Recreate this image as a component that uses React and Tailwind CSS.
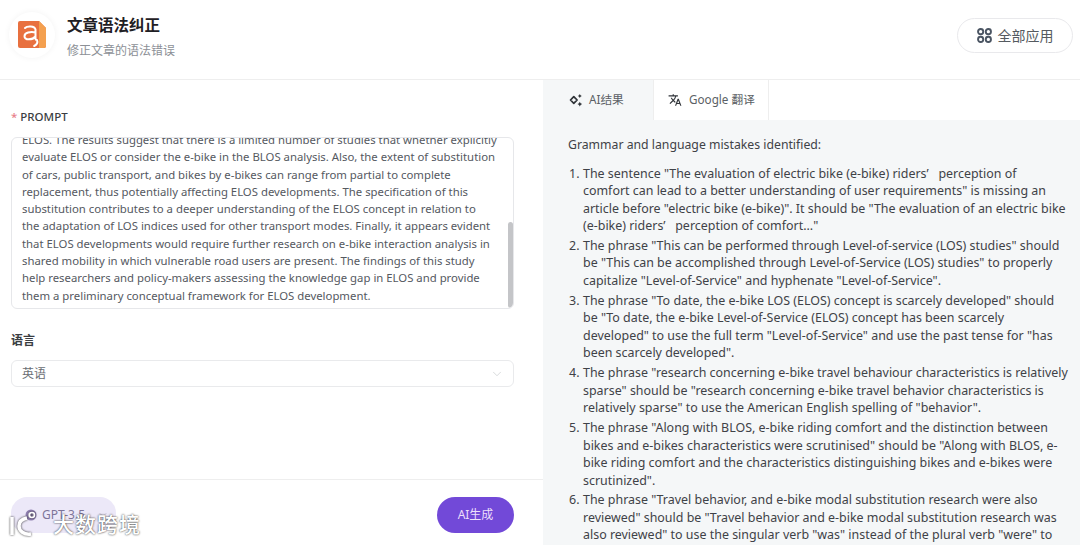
import { ChevronDown } from "lucide-react";
import { MdTranslate } from "react-icons/md";

const FONT = "font-['Noto_Sans','Noto_Sans_CJK_SC',sans-serif]";

const promptLines = [
  "ELOS. The results suggest that there is a limited number of studies that whether explicitly",
  "evaluate ELOS or consider the e-bike in the BLOS analysis. Also, the extent of substitution",
  "of cars, public transport, and bikes by e-bikes can range from partial to complete",
  "replacement, thus potentially affecting ELOS developments. The specification of this",
  "substitution contributes to a deeper understanding of the ELOS concept in relation to",
  "the adaptation of LOS indices used for other transport modes. Finally, it appears evident",
  "that ELOS developments would require further research on e-bike interaction analysis in",
  "shared mobility in which vulnerable road users are present. The findings of this study",
  "help researchers and policy-makers assessing the knowledge gap in ELOS and provide",
  "them a preliminary conceptual framework for ELOS development.",
];

const results = [
  [
    "The sentence \"The evaluation of electric bike (e-bike) riders’   perception of",
    "comfort can lead to a better understanding of user requirements\" is missing an",
    "article before \"electric bike (e-bike)\". It should be \"The evaluation of an electric bike",
    "(e-bike) riders’   perception of comfort...\"",
  ],
  [
    "The phrase \"This can be performed through Level-of-service (LOS) studies\" should",
    "be \"This can be accomplished through Level-of-Service (LOS) studies\" to properly",
    "capitalize \"Level-of-Service\" and hyphenate \"Level-of-Service\".",
  ],
  [
    "The phrase \"To date, the e-bike LOS (ELOS) concept is scarcely developed\" should",
    "be \"To date, the e-bike Level-of-Service (ELOS) concept has been scarcely",
    "developed\" to use the full term \"Level-of-Service\" and use the past tense for \"has",
    "been scarcely developed\".",
  ],
  [
    "The phrase \"research concerning e-bike travel behaviour characteristics is relatively",
    "sparse\" should be \"research concerning e-bike travel behavior characteristics is",
    "relatively sparse\" to use the American English spelling of \"behavior\".",
  ],
  [
    "The phrase \"Along with BLOS, e-bike riding comfort and the distinction between",
    "bikes and e-bikes characteristics were scrutinised\" should be \"Along with BLOS, e-",
    "bike riding comfort and the characteristics distinguishing bikes and e-bikes were",
    "scrutinized\".",
  ],
  [
    "The phrase \"Travel behavior, and e-bike modal substitution research were also",
    "reviewed\" should be \"Travel behavior and e-bike modal substitution research was",
    "also reviewed\" to use the singular verb \"was\" instead of the plural verb \"were\" to",
  ],
];

const AppLogo = () => (
  <div className="-mt-[10px] flex h-[46px] w-[46px] items-center justify-center rounded-full bg-white shadow-[0_0_6px_rgba(0,0,0,0.05)]">
    <svg width="28" height="27" viewBox="0 0 28 27">
      <path d="M2 0H21L28 7V25a2 2 0 0 1-2 2H2a2 2 0 0 1-2-2V2a2 2 0 0 1 2-2z" fill="#e8703f" />
      <path d="M21 0L28 7V25a2 2 0 0 1-2 2H21V0z" fill="#f4a04f" />
      <path
        d="M7 7c2-2 9.500-2.500 10.500 1.500v9c0 1 .5 1.500 1.500 1.500M17.500 11.500c-5-1-11 0-11 3.700 0 4.300 8 4 11 .3M19 19c1 2.500-.5 4.800-2.800 6"
        fill="none"
        stroke="#fff"
        strokeWidth="2"
        strokeLinecap="round"
      />
    </svg>
  </div>
);

const GridIcon = () => (
  <svg width="15" height="15" viewBox="0 0 14 14" fill="none" stroke="#4b5563" strokeWidth="1.8">
    <rect x="1" y="1" width="4.8" height="4.8" rx="2.300" />
    <rect x="8.200" y="1" width="4.8" height="4.8" rx="2.300" />
    <rect x="1" y="8.200" width="4.8" height="4.8" rx="2.300" />
    <rect x="8.200" y="8.200" width="4.8" height="4.8" rx="2.300" />
  </svg>
);

const SparkIcon = () => (
  <svg width="14" height="14" viewBox="0 0 14 14" fill="#2f3338">
    <path d="M4.800 3.600L8.100 7 4.800 10.400 1.500 7z" fill="none" stroke="#2f3338" strokeWidth="1.700" strokeLinejoin="round" />
    <path d="M10.800 1l.7 1.300 1.300.7-1.300.7-.7 1.300-.7-1.300L8.800 3l1.300-.7z" />
    <path d="M10.800 8.800l.8 1.500 1.500.8-1.500.8-.8 1.500-.8-1.500-1.500-.8 1.500-.8z" />
  </svg>
);

const GptIcon = () => (
  <svg width="12" height="12" viewBox="0 0 12 12">
    <circle cx="6" cy="6" r="5.500" fill="#8f7fb0" />
    <circle cx="6" cy="6" r="2.500" fill="none" stroke="#ece8f8" strokeWidth="1.200" />
  </svg>
);

const App = () => {
  return (
    <div className={`relative flex h-[545px] w-[1080px] flex-col overflow-hidden bg-white ${FONT}`}>
      <header className="flex h-20 shrink-0 items-center justify-between border-b border-[#eeeeee] pl-[9px] pr-[7px]">
        <div className="flex items-center gap-[12px]">
          <AppLogo />
          <div className="-mt-[3px] flex flex-col gap-[6px]">
            <h1 className="text-[15.5px] font-bold leading-5 text-[#1f2024]">文章语法纠正</h1>
            <p className="text-xs leading-5 text-[#8c9096]">修正文章的语法错误</p>
          </div>
        </div>
        <button className="-mt-[8px] flex h-[35px] w-[116px] items-center justify-center gap-[6px] rounded-full border border-[#e9e9ec] text-sm text-[#555a60]">
          <GridIcon />
          全部应用
        </button>
      </header>

      <div className="flex min-h-0 flex-1">
        <section className="flex w-[543px] shrink-0 flex-col">
          <div className="flex-1 pl-[11px] pr-[29px] pt-[29px]">
            <div className="text-[11.5px] font-medium leading-4 text-[#3a3d42]">
              <span className="mr-[3px] text-[#e8808a]">*</span>PROMPT
            </div>
            <div className="relative mt-3 h-[172px] overflow-hidden rounded-md border border-[#e6e7ea] pl-[10px] text-[11.35px] leading-[17.3px] text-[#55595f]">
              <div className="-mt-[7px]">
                {promptLines.map((line) => (
                  <div key={line} className="whitespace-nowrap">{line}</div>
                ))}
              </div>
              <div className="absolute bottom-0 right-0 h-[86px] w-[5px] rounded-full bg-[#c4c5c8]" />
            </div>
            <div className="mt-6 text-xs font-bold leading-4 text-[#3a3d42]">语言</div>
            <div className="mt-[11px] flex h-[27px] items-center justify-between rounded-md border border-[#e9eaec] pl-[10px] pr-[9px] text-xs text-[#6a6e73]">
              英语
              <ChevronDown size={14} strokeWidth={1.2} className="text-[#c9cbce]" />
            </div>
          </div>
          <div className="flex h-[66px] shrink-0 justify-between border-t border-[#eeeeee] pl-[11px] pr-[29px] pt-[17px]">
            <div className="flex h-9 w-[105px] items-center gap-[5px] rounded-2xl bg-[#ece8f8] pl-[14px] text-xs text-[#7d7498]">
              <GptIcon />
              GPT-3.5
              <ChevronDown size={12} strokeWidth={1.2} className="ml-[7px] text-[#a8a2bb]" />
            </div>
            <button className="h-9 w-[77px] rounded-full bg-[#7249d8] text-xs text-[#ecdffb]">AI生成</button>
          </div>
        </section>

        <section className="flex min-w-0 flex-1 flex-col bg-[#f5f7f8]">
          <div className="flex h-10 shrink-0 text-[11.7px] text-[#5b5f65]">
            <div className="flex w-[110px] items-center gap-[6px] pl-[26px]">
              <SparkIcon />
              AI结果
            </div>
            <div className="flex w-[116px] items-center gap-[7px] border-x border-[#eeeeee] bg-white pl-[14px]">
              <MdTranslate size={14} className="text-[#2f3338]" />
              Google 翻译
            </div>
            <div className="flex-1 bg-white" />
          </div>
          <div className="pl-[26px] pt-4 text-[12.45px] leading-[17.5px] text-[#3f4247]">
            <p className="-ml-px text-[12.25px]">Grammar and language mistakes identified:</p>
            <ol className="mt-[11px] flex flex-col gap-[2.4px]">
              {results.map((lines, i) => (
                <li key={lines[0]} className="relative pl-[14px]">
                  <span className="absolute left-0">{i + 1}.</span>
                  {lines.map((line) => (
                    <div key={line} className="whitespace-pre">{line}</div>
                  ))}
                </li>
              ))}
            </ol>
          </div>
        </section>
      </div>

      {/* watermark over the corner */}
      <div className="absolute bottom-[7px] left-[10px] flex items-center gap-[17px] text-[21px] font-medium leading-6 tracking-[1px] text-white [text-shadow:0_0_2px_rgba(0,0,0,0.9)]">
        <svg width="26" height="28" viewBox="0 0 26 28" fill="none" stroke="#fff" strokeWidth="3.500" className="drop-shadow-[0_0_1px_rgba(0,0,0,0.8)]">
          <path d="M2 7v18M17 8c-5 1-8 4-8 8 0 5 5 9 12 8" />
          <circle cx="22" cy="5" r="2.500" strokeWidth="1.500" />
        </svg>
        大数跨境
      </div>
    </div>
  );
};

export default App;
